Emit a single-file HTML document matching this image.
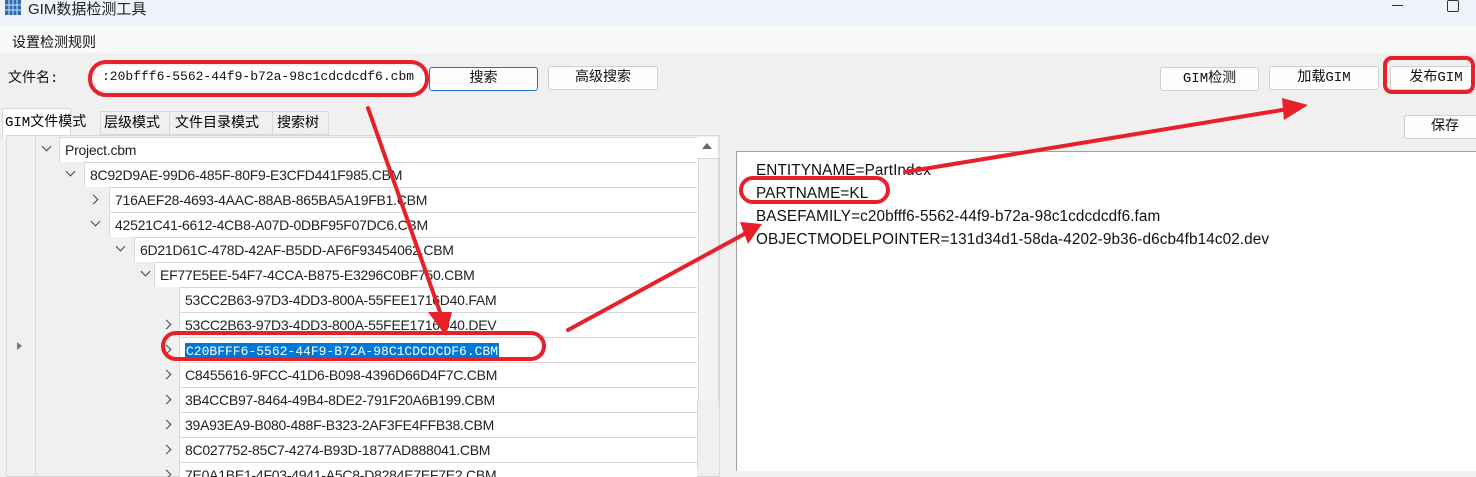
<!DOCTYPE html>
<html><head><meta charset="utf-8"><style>
body{margin:0;width:1476px;height:470px;overflow:hidden;background:#f0f0f0;font-family:"Liberation Sans","Noto Sans CJK SC",sans-serif;position:relative}
.a{position:absolute;white-space:nowrap}
.btn{position:absolute;background:#fdfdfd;border:1px solid #d0d0d0;border-radius:3px;font-family:"Liberation Mono","Noto Sans CJK SC",monospace;font-size:14px;text-align:center;line-height:22px;color:#111}
.row{position:absolute;height:24px;border-top:1px solid #d8d8d8;border-left:1px solid #d8d8d8;background:#fff;font-size:14px;letter-spacing:-0.25px;line-height:24px;padding-left:5px;color:#222;right:0}
.d,.r{position:absolute;width:6px;height:6px;border-right:1.6px solid #444;border-bottom:1.6px solid #444}
.d{transform:rotate(45deg)}
.r{transform:rotate(-45deg)}
</style></head><body>
<div class="a" style="left:0;top:0;width:1476px;height:26px;background:#eef3f9"></div>
<svg class="a" style="left:4px;top:0" width="18" height="16"><rect x="1" y="0" width="16" height="15" fill="#2d6db5"/><g stroke="#cfe0f4" stroke-width="1"><path d="M5 0v15M9 0v15M13 0v15M1 5h16M1 10h16"/></g></svg>
<div class="a" style="left:28px;top:-2px;font-size:15px;color:#222">GIM数据检测工具</div>
<div class="a" style="left:1392px;top:5px;width:11px;height:1px;background:#333"></div>
<div class="a" style="left:1447px;top:0px;width:10px;height:10px;border:1px solid #333;border-radius:2px"></div>
<div class="a" style="left:0;top:26px;width:1476px;height:27px;background:#f9f9f9"></div>
<div class="a" style="left:12px;top:32px;font-size:14px;color:#111">设置检测规则</div>
<div class="a" style="left:8px;top:67px;font-size:14px;font-family:'Liberation Mono','Noto Sans CJK SC',monospace;color:#111">文件名:</div>
<div class="a" style="left:95px;top:66px;width:330px;height:24px;background:#fff"></div>
<div class="a" style="left:102px;top:69px;font-family:'Liberation Mono',monospace;font-size:13px;color:#111">:20bfff6-5562-44f9-b72a-98c1cdcdcdf6.cbm</div>
<div class="btn" style="left:429px;top:67px;width:107px;border-color:#1a73d0">搜索</div>
<div class="btn" style="left:548px;top:66px;width:108px">高级搜索</div>
<div class="btn" style="left:1160px;top:67px;width:97px">GIM检测</div>
<div class="btn" style="left:1269px;top:66px;width:108px">加载GIM</div>
<div class="btn" style="left:1390px;top:66px;width:90px">发布GIM</div>
<div class="btn" style="left:1404px;top:115px;width:80px">保存</div>
<!-- tabs -->
<div class="a" style="left:2px;top:108px;width:67px;height:29px;background:#fff;border:1px solid #d8d8d8;border-bottom:none"></div>
<div class="a" style="left:5px;top:111px;font-size:14px;font-family:'Liberation Mono','Noto Sans CJK SC',monospace">GIM文件模式</div>
<div class="a" style="left:100px;top:111px;width:68px;height:22px;border:1px solid #d8d8d8;background:#f0f0f0"></div>
<div class="a" style="left:104px;top:112px;font-size:14px">层级模式</div>
<div class="a" style="left:169px;top:111px;width:102px;height:22px;border:1px solid #d8d8d8"></div>
<div class="a" style="left:175px;top:112px;font-size:14px">文件目录模式</div>
<div class="a" style="left:272px;top:111px;width:55px;height:22px;border:1px solid #d8d8d8"></div>
<div class="a" style="left:277px;top:112px;font-size:14px">搜索树</div>
<!-- tree -->
<div class="a" style="left:6px;top:135px;width:712px;height:340px;background:#f0f0f0;border:1px solid #d8d8d8"></div>
<div class="a" style="left:35px;top:136px;width:662px;height:340px;background:#f0f0f0;border-left:1px solid #d8d8d8"></div>
<div class="a" style="left:17px;top:342px;width:0;height:0;border-left:5px solid #777;border-top:4px solid transparent;border-bottom:4px solid transparent"></div>
<div class="a" style="left:697px;top:137px;width:20px;height:263px;background:#fff"></div>
<div class="a" style="left:698px;top:158px;width:19px;height:241px;background:#f4f4f4;border:1px solid #d4d4d4"></div>
<div class="a" style="left:702px;top:143px;width:0;height:0;border-bottom:6px solid #666;border-left:5px solid transparent;border-right:5px solid transparent"></div>
<div class="a" style="left:697px;top:400px;width:20px;height:70px;background:#f0f0f0;border-left:1px solid #d8d8d8"></div>
<div class="a" style="left:36px;top:137px;width:661px;height:340px;overflow:hidden">
<div class="row" style="left:23px;top:0">Project.cbm</div><i class="d" style="left:7px;top:6px"></i>
<div class="row" style="left:48px;top:25px">8C92D9AE-99D6-485F-80F9-E3CFD441F985.CBM</div><i class="d" style="left:31px;top:31px"></i>
<div class="row" style="left:73px;top:50px">716AEF28-4693-4AAC-88AB-865BA5A19FB1.CBM</div><i class="r" style="left:54px;top:59px"></i>
<div class="row" style="left:73px;top:75px">42521C41-6612-4CB8-A07D-0DBF95F07DC6.CBM</div><i class="d" style="left:56px;top:81px"></i>
<div class="row" style="left:98px;top:100px">6D21D61C-478D-42AF-B5DD-AF6F93454062.CBM</div><i class="d" style="left:81px;top:106px"></i>
<div class="row" style="left:118px;top:125px">EF77E5EE-54F7-4CCA-B875-E3296C0BF750.CBM</div><i class="d" style="left:106px;top:131px"></i>
<div class="row" style="left:143px;top:150px">53CC2B63-97D3-4DD3-800A-55FEE1716D40.FAM</div>
<div class="row" style="left:143px;top:175px">53CC2B63-97D3-4DD3-800A-55FEE1716D40.DEV</div><i class="r" style="left:127px;top:184px"></i>
<div class="row" style="left:143px;top:200px"><span style="background:#0078d7;color:#fff;font-family:'Liberation Mono',monospace;font-size:13px;letter-spacing:0;padding:1px 1px">C20BFFF6-5562-44F9-B72A-98C1CDCDCDF6.CBM</span></div><i class="r" style="left:127px;top:209px"></i>
<div class="row" style="left:143px;top:225px">C8455616-9FCC-41D6-B098-4396D66D4F7C.CBM</div><i class="r" style="left:127px;top:234px"></i>
<div class="row" style="left:143px;top:250px">3B4CCB97-8464-49B4-8DE2-791F20A6B199.CBM</div><i class="r" style="left:127px;top:259px"></i>
<div class="row" style="left:143px;top:275px">39A93EA9-B080-488F-B323-2AF3FE4FFB38.CBM</div><i class="r" style="left:127px;top:284px"></i>
<div class="row" style="left:143px;top:300px">8C027752-85C7-4274-B93D-1877AD888041.CBM</div><i class="r" style="left:127px;top:309px"></i>
<div class="row" style="left:143px;top:325px">7E0A1BE1-4F03-4941-A5C8-D8284E7EF7E2.CBM</div><i class="r" style="left:127px;top:334px"></i>
</div>
<!-- right panel -->
<div class="a" style="left:736px;top:151px;width:740px;height:319px;background:#fff;border-top:1px solid #a0a0a0;border-left:1px solid #a0a0a0"></div>
<div class="a" style="left:756px;top:159px;font-size:15.3px;letter-spacing:0.1px;line-height:23px;color:#111">ENTITYNAME=PartIndex<br>PARTNAME=KL<br>BASEFAMILY=c20bfff6-5562-44f9-b72a-98c1cdcdcdf6.fam<br>OBJECTMODELPOINTER=131d34d1-58da-4202-9b36-d6cb4fb14c02.dev</div>
<!-- annotations -->
<svg class="a" style="left:0;top:0" width="1476" height="470" fill="none" stroke="#e8202a" stroke-width="4" stroke-linecap="round">
<rect x="90" y="62" width="337" height="33" rx="16"/>
<rect x="163" y="333" width="381" height="26" rx="13"/>
<rect x="741" y="178" width="147" height="24" rx="12"/>
<rect x="1385" y="58" width="88" height="34" rx="7"/>
<path d="M368 108L440 312"/><path d="M568 330L748 232"/><path d="M905 172L1282 110"/>
<g fill="#e8202a" stroke="none">
<path d="M428 312L452 312L446 336Z"/>
<path d="M740 222L762 224L748 244Z"/>
<path d="M1282 98L1308 105L1284 120Z"/>
</g></svg>
</body></html>
